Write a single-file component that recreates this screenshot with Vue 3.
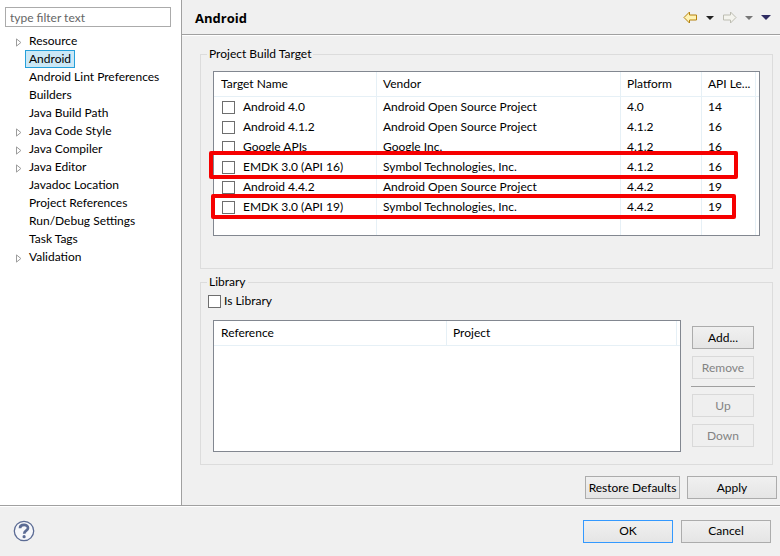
<script setup>
import { ref } from 'vue'

const pages = [
  { name: 'Resource', expandable: true },
  { name: 'Android' },
  { name: 'Android Lint Preferences' },
  { name: 'Builders' },
  { name: 'Java Build Path' },
  { name: 'Java Code Style', expandable: true },
  { name: 'Java Compiler', expandable: true },
  { name: 'Java Editor', expandable: true },
  { name: 'Javadoc Location' },
  { name: 'Project References' },
  { name: 'Run/Debug Settings' },
  { name: 'Task Tags' },
  { name: 'Validation', expandable: true },
]
const current = ref('Android')
const filter = ref('')
const isLibrary = ref(false)
const chosen = ref([])

const targets = [
  { name: 'Android 4.0', vendor: 'Android Open Source Project', platform: '4.0', api: 14 },
  { name: 'Android 4.1.2', vendor: 'Android Open Source Project', platform: '4.1.2', api: 16 },
  { name: 'Google APIs', vendor: 'Google Inc.', platform: '4.1.2', api: 16 },
  { name: 'EMDK 3.0 (API 16)', vendor: 'Symbol Technologies, Inc.', platform: '4.1.2', api: 16 },
  { name: 'Android 4.4.2', vendor: 'Android Open Source Project', platform: '4.4.2', api: 19 },
  { name: 'EMDK 3.0 (API 19)', vendor: 'Symbol Technologies, Inc.', platform: '4.4.2', api: 19 },
]
</script>

<template>
  <div class="dialog">
    <div class="body">
      <nav class="sidebar">
        <input v-model="filter" class="filter" type="text" placeholder="type filter text" aria-label="Filter" />
        <ul class="tree">
          <li v-for="page in pages" :key="page.name" class="node">
            <span class="twisty">
              <svg v-if="page.expandable" width="6" height="9" viewBox="0 0 6 9">
                <path d="M0.5 0.9L4.9 4.5L0.5 8.1Z" fill="#fff" stroke="#9c9c9c" />
              </svg>
            </span>
            <a href="#" class="link" :class="{ selected: page.name === current }" @click.prevent="current = page.name">{{ page.name }}</a>
          </li>
        </ul>
      </nav>

      <main class="page">
        <header class="page-head">
          <h1>Android</h1>
          <div class="history">
            <button class="tool" aria-label="Back">
              <svg width="15" height="13" viewBox="0 0 15 13">
                <path d="M1 6.5L6.5 1V4H13.5V9H6.5V12Z" fill="#fff3b5" stroke="#b5820f" stroke-linejoin="round" />
              </svg>
            </button>
            <button class="tool" aria-label="Back history">
              <svg width="8" height="4" viewBox="0 0 8 4"><path d="M0 0H8L4 4Z" fill="#222" /></svg>
            </button>
            <button class="tool" aria-label="Forward">
              <svg width="15" height="13" viewBox="0 0 15 13">
                <path d="M14 6.5L8.5 1V4H1.5V9H8.5V12Z" fill="#f4f4ee" stroke="#bdbdb2" stroke-linejoin="round" />
              </svg>
            </button>
            <button class="tool" aria-label="Forward history">
              <svg width="8" height="4" viewBox="0 0 8 4"><path d="M0 0H8L4 4Z" fill="#777" /></svg>
            </button>
            <button class="tool" aria-label="Menu">
              <svg width="10" height="5" viewBox="0 0 10 5"><path d="M0 0H10L5 5Z" fill="#2f2c62" /></svg>
            </button>
          </div>
        </header>

        <div class="content">
          <fieldset class="group targets">
            <legend>Project Build Target</legend>
            <div class="frame target-frame">
              <table>
                <colgroup>
                  <col class="c-name" /><col /><col class="c-platform" /><col class="c-api" /><col class="c-end" />
                </colgroup>
                <thead>
                  <tr><th>Target Name</th><th>Vendor</th><th>Platform</th><th>API Le...</th><th class="end"></th></tr>
                </thead>
                <tbody>
                  <tr v-for="t in targets" :key="t.name">
                    <td>
                      <label class="pick"><input v-model="chosen" type="checkbox" :value="t.name" />{{ t.name }}</label>
                    </td>
                    <td>{{ t.vendor }}</td>
                    <td>{{ t.platform }}</td>
                    <td>{{ t.api }}</td>
                    <td class="end"></td>
                  </tr>
                  <tr class="filler"><td></td><td></td><td></td><td></td><td class="end"></td></tr>
                </tbody>
              </table>
              <div class="mark mark-first"></div>
              <div class="mark mark-second"></div>
            </div>
          </fieldset>

          <fieldset class="group library">
            <legend>Library</legend>
            <label class="is-library"><input v-model="isLibrary" type="checkbox" />Is Library</label>
            <div class="library-row">
              <div class="frame library-frame">
                <table>
                  <colgroup><col class="c-half" /><col /><col class="c-end" /></colgroup>
                  <thead>
                    <tr><th>Reference</th><th>Project</th><th class="end"></th></tr>
                  </thead>
                </table>
              </div>
              <div class="side-buttons">
                <button class="btn">Add...</button>
                <button class="btn" disabled>Remove</button>
                <hr />
                <button class="btn" disabled>Up</button>
                <button class="btn" disabled>Down</button>
              </div>
            </div>
          </fieldset>
        </div>

        <div class="page-actions">
          <button class="btn restore">Restore Defaults</button>
          <button class="btn wide">Apply</button>
        </div>
      </main>
    </div>

    <footer class="footer">
      <button class="tool" aria-label="Help">
        <svg width="22" height="22" viewBox="0 0 22 22" fill="none" stroke="#5b6b94">
          <circle cx="11" cy="11" r="9.7" fill="#f6f7fa" stroke-width="1.3" />
          <path d="M7 8.2C7 3.9 15 3.9 15 8C15 10.8 11.2 10.6 11.2 13.7" stroke-width="2.7" />
          <circle cx="11.1" cy="16.7" r="1.6" fill="#5b6b94" stroke="none" />
        </svg>
      </button>
      <div class="footer-actions">
        <button class="btn wide primary">OK</button>
        <button class="btn wide">Cancel</button>
      </div>
    </footer>
  </div>
</template>

<style>
body {
  margin: 0;
  background: #f0f0f0;
}
</style>

<style scoped>
* {
  box-sizing: border-box;
}
.dialog {
  display: flex;
  flex-direction: column;
  min-height: 100vh;
  font: 12px/18px Lato, "Open Sans", sans-serif;
  color: #000;
  background: #f0f0f0;
}
button,
input {
  font: inherit;
  color: inherit;
}
.body {
  display: flex;
  flex: 1;
}
.sidebar {
  flex: 0 0 182px;
  padding: 7px 10px 0 5px;
  background: #fff;
  border-right: 1px solid #a0a0a0;
}
.filter {
  display: block;
  width: 100%;
  height: 20px;
  padding: 0 4px;
  border: 1px solid #ababab;
  background: #fff;
}
.filter::placeholder {
  color: #666;
  opacity: 1;
}
.tree {
  margin: 5px 0 0;
  padding: 0 0 0 10px;
  list-style: none;
}
.node {
  display: flex;
  align-items: center;
  height: 18px;
  white-space: nowrap;
}
.twisty {
  display: flex;
  flex: 0 0 10px;
  padding: 2px 0 0 1px;
}
.link {
  padding: 0 3px;
  border: 1px solid transparent;
  line-height: 16px;
  color: inherit;
  text-decoration: none;
}
.link.selected {
  border-color: #26a0da;
  background: #cbe8f6;
}
.page {
  display: flex;
  flex: 1;
  flex-direction: column;
  min-width: 0;
}
.page-head {
  display: flex;
  align-items: center;
  justify-content: space-between;
  height: 36px;
  padding: 0 9px 0 13px;
  border-bottom: 1px solid #fff;
  box-shadow: inset 0 -1px #a0a0a0;
}
h1 {
  margin: 0;
  font-family: "Open Sans", sans-serif;
  font-size: 13px;
  font-weight: 700;
  color: #000;
}
.history {
  display: flex;
  align-items: center;
  gap: 8px;
}
.tool {
  display: flex;
  padding: 0;
  border: 0;
  background: none;
}
.content {
  display: flex;
  flex: 1;
  flex-direction: column;
  gap: 4px;
  padding: 9px 7px 0 18px;
}
.group {
  min-width: 0;
  margin: 0;
  padding: 0 12px;
  border: 1px solid #dcdcdc;
}
.targets {
  padding: 8px 12px 32px;
}
.library {
  padding: 1px 12px 12px;
}
legend {
  margin-left: -6px;
  padding: 0 2px;
}
.frame {
  background: #fff;
  border: 1px solid #828790;
}
.target-frame {
  position: relative;
}
table {
  width: 100%;
  table-layout: fixed;
  border-collapse: separate;
  border-spacing: 0;
}
.c-name {
  width: 163px;
}
.c-platform {
  width: 81px;
}
.c-api {
  width: 54px;
}
.c-end {
  width: 3px;
}
.c-half {
  width: 50%;
}
th,
td {
  height: 20px;
  padding: 0 0 0 6px;
  border-right: 1px solid #e6f0f6;
  text-align: left;
  font-weight: 400;
  white-space: nowrap;
}
th:first-child,
td:first-child {
  padding-left: 7px;
}
th {
  height: 25px;
  border-bottom: 1px solid #e6f0f6;
}
th.end,
td.end {
  padding: 0;
  border-right: 0;
}
.filler td {
  height: 18px;
}
.pick,
.is-library {
  display: flex;
  align-items: center;
}
.pick {
  gap: 8px;
  padding-left: 1px;
}
.is-library {
  gap: 3px;
  margin-left: -5px;
}
input[type="checkbox"] {
  appearance: none;
  width: 13px;
  height: 13px;
  margin: 0;
  border: 1px solid #6e6e6e;
  background: #fff;
}
input[type="checkbox"]:checked {
  background: #444;
  box-shadow: inset 0 0 0 2px #fff;
}
.mark {
  position: absolute;
  border: 4px solid #f60000;
  border-radius: 2px;
  pointer-events: none;
}
.mark-first {
  top: 79px;
  right: 21px;
  left: -5px;
  height: 28px;
}
.mark-second {
  top: 122px;
  right: 23px;
  left: -3px;
  height: 25px;
}
.library-row {
  display: flex;
  gap: 10px;
  margin-top: 10px;
}
.library-frame {
  flex: 1;
  min-height: 132px;
}
.side-buttons {
  display: flex;
  flex: 0 0 64px;
  flex-direction: column;
  gap: 7px;
  margin-right: 5px;
  padding-top: 6px;
}
.side-buttons .btn {
  margin: 0 1px;
}
hr {
  width: 100%;
  margin: 0;
  border: 0;
  border-top: 1px solid #a0a0a0;
}
.btn {
  height: 23px;
  padding: 0;
  border: 1px solid #acacac;
  background: linear-gradient(#f0f0f0, #e5e5e5);
  line-height: 20px;
  white-space: nowrap;
}
.btn:disabled {
  border-color: #d9d9d9;
  background: #efefef;
  color: #838383;
}
.page-actions,
.footer-actions {
  display: flex;
  justify-content: flex-end;
}
.page-actions {
  gap: 7px;
  padding: 0 3px 6px;
}
.restore {
  width: 95px;
}
.wide {
  width: 90px;
}
.primary {
  border-color: #3399ff;
}
.footer {
  display: flex;
  align-items: center;
  justify-content: space-between;
  height: 51px;
  padding: 0 9px 0 13px;
  border-top: 1px solid #a0a0a0;
  box-shadow: inset 0 1px #fff;
}
.footer-actions {
  gap: 8px;
}
</style>
